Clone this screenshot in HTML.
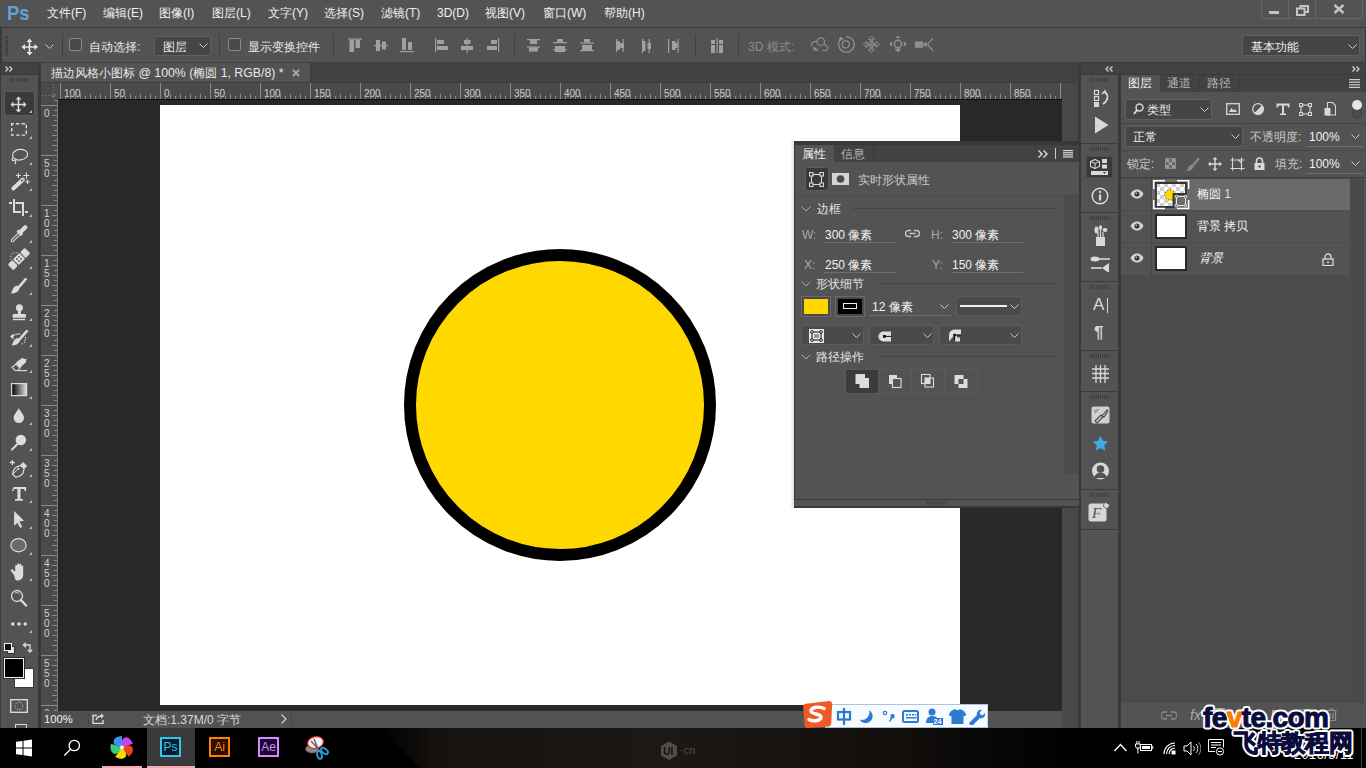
<!DOCTYPE html>
<html><head><meta charset="utf-8">
<style>
*{margin:0;padding:0;box-sizing:border-box}
html,body{width:1366px;height:768px;overflow:hidden;background:#535353;font-family:"Liberation Sans",sans-serif;color:#ddd;font-size:12px}
.a{position:absolute}
.oi{top:30px;line-height:34px;font-size:12px;color:#e8e8e8;white-space:nowrap}
.mi{top:0;line-height:27px;font-size:12px;color:#f0f0f0;white-space:nowrap}
</style></head><body>
<!-- menu bar -->
<div class="a" style="left:0;top:0;width:1366px;height:27px;background:#535353"></div>
<div class="a" style="left:0;top:27px;width:1366px;height:1px;background:#3a3a3a"></div>
<div class="a" style="left:7px;top:0px;font-size:21px;line-height:25px;font-weight:bold;color:#65a0d8;transform:scaleX(0.88);transform-origin:left">Ps</div>
<div class="a mi" style="left:47px">文件(F)</div>
<div class="a mi" style="left:103px">编辑(E)</div>
<div class="a mi" style="left:159px">图像(I)</div>
<div class="a mi" style="left:212px">图层(L)</div>
<div class="a mi" style="left:268px">文字(Y)</div>
<div class="a mi" style="left:324px">选择(S)</div>
<div class="a mi" style="left:381px">滤镜(T)</div>
<div class="a mi" style="left:437px">3D(D)</div>
<div class="a mi" style="left:485px">视图(V)</div>
<div class="a mi" style="left:543px">窗口(W)</div>
<div class="a mi" style="left:604px">帮助(H)</div>
<div class="a" style="left:1261px;top:-2px;width:102px;height:21px;border:1px solid #676767;border-radius:0 0 4px 4px"></div>
<div class="a" style="left:1288px;top:0;width:1px;height:18px;background:#676767"></div>
<div class="a" style="left:1315px;top:0;width:1px;height:18px;background:#676767"></div>
<div class="a" style="left:1269px;top:11px;width:10px;height:3px;background:#c4c4c4"></div>
<svg class="a" style="left:1296px;top:5px" width="13" height="11"><path d="M4.5 3.5V1h7.5v6h-3M1 3.5h7.5v6.5H1z" fill="none" stroke="#c4c4c4" stroke-width="2"/></svg>
<svg class="a" style="left:1333px;top:4px" width="12" height="10"><path d="M1.5 1l9 8M10.5 1l-9 8" stroke="#c4c4c4" stroke-width="2.4"/></svg>
<!-- options bar -->
<div class="a" style="left:0;top:28px;width:1366px;height:34px;background:#535353;border-left:2px solid #3a3a3a;border-right:1px solid #3a3a3a"></div>
<div class="a" style="left:5px;top:36px;width:3px;height:19px;background:repeating-linear-gradient(#383838 0 1px,transparent 1px 2px)"></div>
<svg class="a" style="left:21px;top:38px" width="18" height="18"><path d="M8.5 2v14M2 9h14" stroke="#e6e6e6" stroke-width="1.6"/><path d="M8.5 0.5l3 3.5h-6zM8.5 17.5l3-3.5h-6zM0.5 9l3.5-3v6zM17 9l-3.5-3v6z" fill="#e6e6e6"/></svg>
<svg class="a" style="left:45px;top:44px" width="9" height="6"><path d="M0.5 0.5l4 4 4-4" fill="none" stroke="#c8c8c8" stroke-width="1"/></svg>
<div class="a" style="left:62px;top:34px;width:1px;height:23px;background:#414141"></div>
<div class="a" style="left:69px;top:38px;width:13px;height:13px;border:1px solid #8a8a8a;border-radius:2px;background:#4a4a4a"></div>
<div class="a oi" style="left:89px">自动选择:</div>
<div class="a" style="left:154px;top:36px;width:57px;height:20px;border:1px solid #606060;background:#454545;border-radius:2px"></div>
<div class="a oi" style="left:163px">图层</div>
<svg class="a" style="left:199px;top:43px" width="9" height="6"><path d="M0.5 0.5l4 4 4-4" fill="none" stroke="#c8c8c8" stroke-width="1"/></svg>
<div class="a" style="left:219px;top:34px;width:1px;height:23px;background:#414141"></div>
<div class="a" style="left:228px;top:38px;width:13px;height:13px;border:1px solid #8a8a8a;border-radius:2px;background:#4a4a4a"></div>
<div class="a oi" style="left:248px">显示变换控件</div>
<div class="a" style="left:333px;top:34px;width:1px;height:23px;background:#414141"></div>
<svg class="a" style="left:346px;top:38px" width="380" height="16" fill="#a0a0a0">
<rect x="2" y="0.5" width="14" height="1.2"/><rect x="3.5" y="2" width="4.5" height="12"/><rect x="9.5" y="2" width="4.5" height="8"/>
<rect x="28" y="7" width="14" height="1.2"/><rect x="30" y="2" width="4" height="11"/><rect x="36" y="3.5" width="4" height="8"/>
<rect x="54" y="13" width="14" height="1.2"/><rect x="56" y="0" width="4" height="12"/><rect x="62" y="4" width="4" height="8"/>
<rect x="89" y="0" width="1.2" height="14"/><rect x="91" y="2" width="7" height="4"/><rect x="91" y="8" width="11" height="4"/>
<rect x="120.5" y="0" width="1.2" height="15"/><rect x="118" y="2" width="6.5" height="4"/><rect x="115" y="8" width="12" height="4"/>
<rect x="152" y="0" width="1.2" height="14"/><rect x="145" y="2" width="6" height="4"/><rect x="141" y="8" width="10" height="4"/>
<rect x="181" y="1" width="13" height="1.2"/><rect x="181" y="8.5" width="13" height="1.2"/><rect x="184" y="2" width="7" height="4"/><rect x="183" y="9.5" width="9" height="4"/>
<rect x="207" y="4" width="14" height="1.2"/><rect x="207" y="11" width="14" height="1.2"/><rect x="211" y="1" width="6" height="3"/><rect x="209" y="8" width="10" height="6"/>
<rect x="234" y="4.5" width="14" height="1.2"/><rect x="234" y="12" width="14" height="1.2"/><rect x="238" y="1" width="6" height="3.5"/><rect x="236" y="7" width="10" height="5"/>
<rect x="270" y="1" width="1.2" height="13"/><rect x="271" y="3" width="3" height="9"/><rect x="274" y="5" width="4" height="5"/><rect x="276.5" y="1" width="1.2" height="13"/>
<rect x="296" y="1" width="1.2" height="14"/><rect x="296" y="3" width="3.5" height="10"/><rect x="302.5" y="1" width="1.2" height="14"/><rect x="301.5" y="5" width="3.5" height="6"/>
<rect x="331.5" y="1" width="1.2" height="14"/><rect x="326" y="3" width="3.5" height="9"/><rect x="328" y="5" width="3.5" height="5"/><rect x="322" y="1" width="1.2" height="14"/>
<rect x="365" y="2" width="4" height="4"/><rect x="365" y="7" width="4" height="8"/><rect x="370.5" y="0" width="1.2" height="15"/><rect x="373" y="2" width="4" height="4"/><rect x="373" y="7" width="4" height="8"/>
</svg>
<div class="a" style="left:514px;top:34px;width:1px;height:23px;background:#414141"></div>
<div class="a" style="left:695px;top:34px;width:1px;height:23px;background:#414141"></div>
<div class="a" style="left:738px;top:34px;width:1px;height:23px;background:#414141"></div>
<div class="a oi" style="left:748px;color:#8c8c8c">3D 模式:</div>
<svg class="a" style="left:805px;top:34px" width="135" height="24" fill="none" stroke="#8f8f8f" stroke-width="1.2">
<circle cx="15.8" cy="7.7" r="3.8"/><path d="M11.8 7.2C7 8 5.5 10 6.8 12.3"/><path d="M8.6 12.2l5.6 4.3H8.2z" fill="#8f8f8f" stroke="none"/><path d="M17.5 16.5h3.2a2.3 2.3 0 0 0 1-4.3L19.3 9.9"/>
<path d="M36.2 4.6A7.8 7.8 0 1 0 41 2.6" /><path d="M33.5 7.5l1.5-5 4.2 2.2z" fill="#8f8f8f" stroke="none"/><circle cx="40.7" cy="10.4" r="3.5"/>
<path d="M66.4 2.4 L69.4 5.4 L67.6 5.4 L67.6 9.2 L71.4 9.2 L71.4 7.4 L74.4 10.4 L71.4 13.4 L71.4 11.6 L67.6 11.6 L67.6 15.4 L69.4 15.4 L66.4 18.4 L63.4 15.4 L65.2 15.4 L65.2 11.6 L61.4 11.6 L61.4 13.4 L58.4 10.4 L61.4 7.4 L61.4 9.2 L65.2 9.2 L65.2 5.4 L63.4 5.4z" stroke-width="1"/><path d="M66.4 5v10.8M61 10.4h10.8" stroke-width="0.8"/>
<circle cx="92.9" cy="9.9" r="3.6" stroke-width="1.6"/><path d="M92.9 1.5l2.5 2.6h-5zM84 9.9l3-2.8v5.6zM101.8 9.9l-3-2.8v5.6zM92.9 18.6l3.6-3.8h-7.2z" fill="#8f8f8f" stroke="none"/><path d="M92.9 14v2.5" stroke-width="2"/>
<rect x="109.9" y="7.4" width="8.2" height="6.4" fill="#8f8f8f" stroke="none"/><path d="M117.5 10.6l4-3v6z" fill="#8f8f8f" stroke="none"/><path d="M128 4.4l-5.5 6 5.5 6.4"/>
</svg>
<div class="a" style="left:1242px;top:35px;width:118px;height:21px;border:1px solid #606060;background:#454545;border-radius:2px"></div>
<div class="a oi" style="left:1251px;top:30px;color:#f0f0f0">基本功能</div>
<svg class="a" style="left:1348px;top:44px" width="9" height="6"><path d="M0.5 0.5l4 4 4-4" fill="none" stroke="#c8c8c8" stroke-width="1"/></svg>
<!-- doc tab row -->
<div class="a" style="left:41px;top:62px;width:1037px;height:21px;background:#424242"></div>
<div class="a" style="left:41px;top:63px;width:269px;height:19px;background:#535353"></div>
<div class="a" style="left:51px;top:64px;line-height:19px;font-size:12.3px;color:#e8e8e8;white-space:nowrap">描边风格小图标 @ 100% (椭圆 1, RGB/8) *</div>
<svg class="a" style="left:292px;top:69px" width="8" height="8"><path d="M1 1l6 6M7 1l-6 6" stroke="#a8a8a8" stroke-width="1.8"/></svg>
<div class="a" style="left:310px;top:63px;width:1px;height:19px;background:#3a3a3a"></div>
<div class="a" style="left:41px;top:82px;width:1037px;height:1px;background:#3c3c3c"></div>
<!-- left toolbar -->
<div class="a" style="left:0;top:62px;width:41px;height:666px;background:#3a3a3a"></div>
<div class="a" style="left:1px;top:75px;width:37px;height:653px;background:#535353"></div>
<div class="a" style="left:1px;top:63px;width:37px;height:11px;background:#424242"></div>
<svg class="a" style="left:5px;top:66px" width="9" height="6" fill="none" stroke="#d0d0d0" stroke-width="1.3"><path d="M0.5 0.5L3 3 0.5 5.5M4.5 0.5L7 3 4.5 5.5"/></svg>
<div class="a" style="left:10px;top:78px;width:19px;height:4px;background:repeating-linear-gradient(90deg,#3c3c3c 0 1px,transparent 1px 2px)"></div>
<div class="a" style="left:4px;top:91px;width:31px;height:25px;background:#3a3a3a;border:1px solid #5c5c5c;border-radius:3px"></div>
<svg class="a" style="left:0;top:85px" width="40" height="550"><g transform="translate(0 -85)">
<path d="M18.5 98v13M12 104.5h13" stroke="#dcdcdc" stroke-width="1.6"/><path d="M18.5 96.5l3 3h-6zM18.5 112.5l3-3h-6zM10.5 104.5l3-3v6zM26.5 104.5l-3-3v6z" fill="#dcdcdc"/>
<rect x="11.7" y="123.7" width="14.6" height="11.4" fill="none" stroke="#dcdcdc" stroke-width="1.4" stroke-dasharray="3.5 2.2" stroke-dashoffset="1.5"/>
<ellipse cx="20.1" cy="154.7" rx="7.6" ry="5.3" fill="none" stroke="#dcdcdc" stroke-width="1.2" transform="rotate(-8 20 155)"/><path d="M13 158c-1.5 1-1 3 1 2.5s2 1.5 1 3.8" fill="none" stroke="#dcdcdc" stroke-width="1.2"/>
<path d="M13.3 188.5l9.5-8.8" stroke="#dcdcdc" stroke-width="4" stroke-linecap="round"/><path d="M21.5 181l1.3-1.2" stroke="#535353" stroke-width="1.2" stroke-linecap="round"/>
<path d="M18.4 173v5M15.9 175.5h5M26.4 172.5v6M23.4 175.5h6M27.5 179.5v4.4M25.3 181.7h4.4" stroke="#dcdcdc" stroke-width="1.1"/>
<rect x="13" y="199" width="2" height="14" fill="#dcdcdc"/><rect x="9" y="202" width="3" height="2" fill="#dcdcdc"/><rect x="15.5" y="202" width="8.5" height="2" fill="#dcdcdc"/><rect x="22" y="202" width="2" height="14" fill="#dcdcdc"/><rect x="13" y="211" width="8" height="2" fill="#dcdcdc"/><rect x="25" y="211" width="3" height="2" fill="#dcdcdc"/>
<path d="M12.5 240.5l7.5-7.5" stroke="#dcdcdc" stroke-width="3.4" stroke-linecap="round"/><path d="M12.5 240.5l7.5-7.5" stroke="#535353" stroke-width="1.2" stroke-linecap="round"/><path d="M17.5 230.5l4.5 4.5" stroke="#dcdcdc" stroke-width="3"/><path d="M21 231.5l4.3-4.3" stroke="#dcdcdc" stroke-width="4.2" stroke-linecap="round"/>
<g transform="rotate(-45 19 259)"><rect x="7" y="255" width="6.5" height="8" rx="1.5" fill="#dcdcdc"/><rect x="14.5" y="255" width="9" height="8" fill="#dcdcdc"/><rect x="24.5" y="255" width="6.5" height="8" rx="1.5" fill="#dcdcdc"/><g fill="#535353"><circle cx="17.5" cy="257.5" r="0.9"/><circle cx="20.5" cy="257.5" r="0.9"/><circle cx="17.5" cy="260.5" r="0.9"/><circle cx="20.5" cy="260.5" r="0.9"/></g></g>
<path d="M11 259.5a5 5 0 0 1 7.5-6" fill="none" stroke="#dcdcdc" stroke-width="1.1" stroke-dasharray="1 1.6"/>
<path d="M25.7 279.2L18.5 287.5" stroke="#dcdcdc" stroke-width="2.6" stroke-linecap="round"/><path d="M18.7 286c-3.5-1-6 1.5-7.4 7.8 3.5-.3 6.8-1.8 8-4.5z" fill="#dcdcdc"/>
<circle cx="19.4" cy="307.8" r="3.5" fill="#dcdcdc"/><rect x="17.9" y="310" width="3" height="4.5" fill="#dcdcdc"/><path d="M12.7 317.7v-2.5c0-1 .5-1.2 1.5-1.2h10.2c1 0 1.5.2 1.5 1.2v2.5z" fill="#dcdcdc"/><rect x="12.9" y="318.8" width="12.1" height="1.4" fill="#dcdcdc"/>
<path d="M26.8 331.2L19 340" stroke="#dcdcdc" stroke-width="2.6" stroke-linecap="round"/><path d="M19.2 338.5c-3.5-1-6 1.5-7.2 7.3 3.5-.3 6.6-1.8 7.8-4.5z" fill="#dcdcdc"/><path d="M10 336.5l3.5-3v6z" fill="#dcdcdc"/><path d="M12.5 336.3c2-1.5 4.5-2.5 8-2.5" fill="none" stroke="#dcdcdc" stroke-width="1"/><g fill="#dcdcdc"><circle cx="25.5" cy="337.5" r="0.7"/><circle cx="25.3" cy="339.8" r="0.7"/><circle cx="24.5" cy="342" r="0.7"/><circle cx="22.3" cy="343.8" r="0.7"/></g>
<path d="M20 359.5l6-1.5-0.5 0 1 2-6.5 6.5-4-4z" fill="#dcdcdc"/><path d="M22.5 357.5l4 4-6.5 6.5-4-4z" fill="#dcdcdc"/><path d="M16 364l4 4-2.3 2.5h-2.5l-3.2-3.2z" fill="none" stroke="#dcdcdc" stroke-width="1.1"/><path d="M17.5 370.6h9.6" stroke="#dcdcdc" stroke-width="1.2"/>
<defs><linearGradient id="gr2" x1="0" y1="0" x2="1" y2="0"><stop offset="0" stop-color="#000"/><stop offset="1" stop-color="#e0e0e0"/></linearGradient></defs><rect x="11.6" y="383.6" width="15" height="12" fill="url(#gr2)" stroke="#dcdcdc" stroke-width="1.2"/>
<path d="M18.8 408c-1 3-5.2 6.3-5.2 9.7a5.2 5.2 0 0 0 10.4 0c0-3.4-4.2-6.7-5.2-9.7z" fill="#dcdcdc"/>
<circle cx="20.8" cy="440" r="5.2" fill="#dcdcdc"/><path d="M17 444.5l-5 5" stroke="#dcdcdc" stroke-width="2" stroke-linecap="round"/>
<path d="M12.4 460v5M9.9 462.5h5" stroke="#dcdcdc" stroke-width="1.3"/><path d="M12.6 474.2c.3-3 1.6-5.8 3.8-7.3l4.5-1.2 3.2 3.2-1.2 4.5c-1.5 2.2-4.3 3.5-7.3 3.8z" fill="none" stroke="#dcdcdc" stroke-width="1.2"/><path d="M20.4 464.7l2.7-2.7 4 4-2.7 2.7z" fill="#dcdcdc"/><path d="M13 474l4.8-4.8" stroke="#dcdcdc" stroke-width="1"/><circle cx="18.4" cy="468.8" r="1.1" fill="#dcdcdc"/>
<path d="M13.8 487h12.3v4h-1.5l-.6-2h-3.5v10h2.4v1.7h-7.9V499h2.4v-10h-3.4l-.6 2h-1.6z" fill="#dcdcdc"/>
<path d="M14.1 511v15l3.2-3.3 3 5.2 2-1.2-3-5.1 4.7-.8z" fill="#dcdcdc"/>
<ellipse cx="18.5" cy="545.2" rx="7.6" ry="6.6" fill="#6a6a6a" stroke="#dcdcdc" stroke-width="1.2"/>
<path d="M14 575l-3-4a1.1 1.1 0 0 1 1.7-1.4l2.5 2.5V566a1 1 0 0 1 2 0v5v-6.4a1 1 0 0 1 2 0V571v-6.3a1 1 0 0 1 2 0V571v-4.5a1 1 0 0 1 2 0V575c0 3-2.5 5.5-5.5 5.5S15 578 14 575z" fill="#dcdcdc"/>
<circle cx="17" cy="596" r="5.5" fill="none" stroke="#dcdcdc" stroke-width="1.3"/><path d="M20.8 600l5.3 5.5" stroke="#dcdcdc" stroke-width="2.4" stroke-linecap="round"/><path d="M15 593a3.5 3.5 0 0 1 4.5 1" fill="none" stroke="#dcdcdc" stroke-width="0.9"/>
<circle cx="12.8" cy="624" r="1.8" fill="#dcdcdc"/><circle cx="19" cy="624" r="1.8" fill="#dcdcdc"/><circle cx="25.2" cy="624" r="1.8" fill="#dcdcdc"/>
<path d="M32 110v3h-3z" fill="#b8b8b8"/><path d="M32 136v3h-3z" fill="#b8b8b8"/><path d="M32 162v3h-3z" fill="#b8b8b8"/><path d="M32 188v3h-3z" fill="#b8b8b8"/><path d="M32 214v3h-3z" fill="#b8b8b8"/><path d="M32 240v3h-3z" fill="#b8b8b8"/><path d="M32 266v3h-3z" fill="#b8b8b8"/><path d="M32 292v3h-3z" fill="#b8b8b8"/><path d="M32 318v3h-3z" fill="#b8b8b8"/><path d="M32 344v3h-3z" fill="#b8b8b8"/><path d="M32 370v3h-3z" fill="#b8b8b8"/><path d="M32 396v3h-3z" fill="#b8b8b8"/><path d="M32 422v3h-3z" fill="#b8b8b8"/><path d="M32 448v3h-3z" fill="#b8b8b8"/><path d="M32 474v3h-3z" fill="#b8b8b8"/><path d="M32 500v3h-3z" fill="#b8b8b8"/><path d="M32 526v3h-3z" fill="#b8b8b8"/><path d="M32 552v3h-3z" fill="#b8b8b8"/><path d="M32 578v3h-3z" fill="#b8b8b8"/><path d="M32 630v3h-3z" fill="#b8b8b8"/>
</g></svg>
<svg class="a" style="left:4px;top:643px" width="11" height="11"><rect x="3.5" y="3.5" width="7" height="7" fill="#e6e6e6" stroke="#333"/><rect x="0.5" y="0.5" width="7" height="7" fill="#111" stroke="#eee"/></svg>
<svg class="a" style="left:22px;top:642px" width="11" height="11" fill="none" stroke="#ddd" stroke-width="1.3"><path d="M1.5 3h6.5v7"/><path d="M3.8 0.8L1.5 3l2.3 2.2M5.8 7.8L8 10l2.2-2.2"/></svg>
<div class="a" style="left:14px;top:668px;width:20px;height:20px;background:#fff;border:1px solid #3a3a3a"></div>
<div class="a" style="left:4px;top:658px;width:20px;height:20px;background:#000;border:1.5px solid #f0f0f0;box-shadow:0 0 0 1px #2a2a2a"></div>
<svg class="a" style="left:10px;top:699px" width="18" height="14"><rect x="0.7" y="0.7" width="16.6" height="12.6" fill="none" stroke="#d8d8d8" stroke-width="1.4"/><circle cx="9" cy="7" r="3.8" fill="none" stroke="#d8d8d8" stroke-dasharray="1 1.3"/></svg>
<div class="a" style="left:15px;top:724px;width:12px;height:6px;border:1.5px solid #d8d8d8;border-bottom:0"></div>
<!-- rulers -->
<div class="a" style="left:41px;top:83px;width:1037px;height:17px;background:#4a4a4a"></div>
<div class="a" style="left:41px;top:83px;width:17px;height:628px;background:#4a4a4a"></div>
<div class="a" style="left:57px;top:100px;width:1px;height:611px;background:#7c7c7c"></div>
<svg class="a" style="left:41px;top:83px" width="17" height="17"><path d="M12.5 1v15M1 12.5h15" stroke="#7a7a7a" stroke-dasharray="1 2"/><path d="M12.5 10.5l2 2-2 2-2-2z" fill="none" stroke="#7a7a7a"/></svg>
<div class="a" style="left:58px;top:99px;width:1004px;height:1px;background:#111"></div>
<svg class="a" style="left:58px;top:83px" width="1004" height="16" font-size="10" font-family="Liberation Sans"><rect x="2" y="0" width="1" height="16" fill="#8a8a8a"/><text x="6" y="14" fill="#d0d0d0">100</text><rect x="7" y="13" width="1" height="3" fill="#8a8a8a"/><rect x="12" y="11" width="1" height="5" fill="#8a8a8a"/><rect x="17" y="13" width="1" height="3" fill="#8a8a8a"/><rect x="22" y="11" width="1" height="5" fill="#8a8a8a"/><rect x="27" y="13" width="1" height="3" fill="#8a8a8a"/><rect x="32" y="11" width="1" height="5" fill="#8a8a8a"/><rect x="37" y="13" width="1" height="3" fill="#8a8a8a"/><rect x="42" y="11" width="1" height="5" fill="#8a8a8a"/><rect x="47" y="13" width="1" height="3" fill="#8a8a8a"/><rect x="52" y="0" width="1" height="16" fill="#8a8a8a"/><text x="56" y="14" fill="#d0d0d0">50</text><rect x="57" y="13" width="1" height="3" fill="#8a8a8a"/><rect x="62" y="11" width="1" height="5" fill="#8a8a8a"/><rect x="67" y="13" width="1" height="3" fill="#8a8a8a"/><rect x="72" y="11" width="1" height="5" fill="#8a8a8a"/><rect x="77" y="13" width="1" height="3" fill="#8a8a8a"/><rect x="82" y="11" width="1" height="5" fill="#8a8a8a"/><rect x="87" y="13" width="1" height="3" fill="#8a8a8a"/><rect x="92" y="11" width="1" height="5" fill="#8a8a8a"/><rect x="97" y="13" width="1" height="3" fill="#8a8a8a"/><rect x="102" y="0" width="1" height="16" fill="#8a8a8a"/><text x="106" y="14" fill="#d0d0d0">0</text><rect x="107" y="13" width="1" height="3" fill="#8a8a8a"/><rect x="112" y="11" width="1" height="5" fill="#8a8a8a"/><rect x="117" y="13" width="1" height="3" fill="#8a8a8a"/><rect x="122" y="11" width="1" height="5" fill="#8a8a8a"/><rect x="127" y="13" width="1" height="3" fill="#8a8a8a"/><rect x="132" y="11" width="1" height="5" fill="#8a8a8a"/><rect x="137" y="13" width="1" height="3" fill="#8a8a8a"/><rect x="142" y="11" width="1" height="5" fill="#8a8a8a"/><rect x="147" y="13" width="1" height="3" fill="#8a8a8a"/><rect x="152" y="0" width="1" height="16" fill="#8a8a8a"/><text x="156" y="14" fill="#d0d0d0">50</text><rect x="157" y="13" width="1" height="3" fill="#8a8a8a"/><rect x="162" y="11" width="1" height="5" fill="#8a8a8a"/><rect x="167" y="13" width="1" height="3" fill="#8a8a8a"/><rect x="172" y="11" width="1" height="5" fill="#8a8a8a"/><rect x="177" y="13" width="1" height="3" fill="#8a8a8a"/><rect x="182" y="11" width="1" height="5" fill="#8a8a8a"/><rect x="187" y="13" width="1" height="3" fill="#8a8a8a"/><rect x="192" y="11" width="1" height="5" fill="#8a8a8a"/><rect x="197" y="13" width="1" height="3" fill="#8a8a8a"/><rect x="202" y="0" width="1" height="16" fill="#8a8a8a"/><text x="206" y="14" fill="#d0d0d0">100</text><rect x="207" y="13" width="1" height="3" fill="#8a8a8a"/><rect x="212" y="11" width="1" height="5" fill="#8a8a8a"/><rect x="217" y="13" width="1" height="3" fill="#8a8a8a"/><rect x="222" y="11" width="1" height="5" fill="#8a8a8a"/><rect x="227" y="13" width="1" height="3" fill="#8a8a8a"/><rect x="232" y="11" width="1" height="5" fill="#8a8a8a"/><rect x="237" y="13" width="1" height="3" fill="#8a8a8a"/><rect x="242" y="11" width="1" height="5" fill="#8a8a8a"/><rect x="247" y="13" width="1" height="3" fill="#8a8a8a"/><rect x="252" y="0" width="1" height="16" fill="#8a8a8a"/><text x="256" y="14" fill="#d0d0d0">150</text><rect x="257" y="13" width="1" height="3" fill="#8a8a8a"/><rect x="262" y="11" width="1" height="5" fill="#8a8a8a"/><rect x="267" y="13" width="1" height="3" fill="#8a8a8a"/><rect x="272" y="11" width="1" height="5" fill="#8a8a8a"/><rect x="277" y="13" width="1" height="3" fill="#8a8a8a"/><rect x="282" y="11" width="1" height="5" fill="#8a8a8a"/><rect x="287" y="13" width="1" height="3" fill="#8a8a8a"/><rect x="292" y="11" width="1" height="5" fill="#8a8a8a"/><rect x="297" y="13" width="1" height="3" fill="#8a8a8a"/><rect x="302" y="0" width="1" height="16" fill="#8a8a8a"/><text x="306" y="14" fill="#d0d0d0">200</text><rect x="307" y="13" width="1" height="3" fill="#8a8a8a"/><rect x="312" y="11" width="1" height="5" fill="#8a8a8a"/><rect x="317" y="13" width="1" height="3" fill="#8a8a8a"/><rect x="322" y="11" width="1" height="5" fill="#8a8a8a"/><rect x="327" y="13" width="1" height="3" fill="#8a8a8a"/><rect x="332" y="11" width="1" height="5" fill="#8a8a8a"/><rect x="337" y="13" width="1" height="3" fill="#8a8a8a"/><rect x="342" y="11" width="1" height="5" fill="#8a8a8a"/><rect x="347" y="13" width="1" height="3" fill="#8a8a8a"/><rect x="352" y="0" width="1" height="16" fill="#8a8a8a"/><text x="356" y="14" fill="#d0d0d0">250</text><rect x="357" y="13" width="1" height="3" fill="#8a8a8a"/><rect x="362" y="11" width="1" height="5" fill="#8a8a8a"/><rect x="367" y="13" width="1" height="3" fill="#8a8a8a"/><rect x="372" y="11" width="1" height="5" fill="#8a8a8a"/><rect x="377" y="13" width="1" height="3" fill="#8a8a8a"/><rect x="382" y="11" width="1" height="5" fill="#8a8a8a"/><rect x="387" y="13" width="1" height="3" fill="#8a8a8a"/><rect x="392" y="11" width="1" height="5" fill="#8a8a8a"/><rect x="397" y="13" width="1" height="3" fill="#8a8a8a"/><rect x="402" y="0" width="1" height="16" fill="#8a8a8a"/><text x="406" y="14" fill="#d0d0d0">300</text><rect x="407" y="13" width="1" height="3" fill="#8a8a8a"/><rect x="412" y="11" width="1" height="5" fill="#8a8a8a"/><rect x="417" y="13" width="1" height="3" fill="#8a8a8a"/><rect x="422" y="11" width="1" height="5" fill="#8a8a8a"/><rect x="427" y="13" width="1" height="3" fill="#8a8a8a"/><rect x="432" y="11" width="1" height="5" fill="#8a8a8a"/><rect x="437" y="13" width="1" height="3" fill="#8a8a8a"/><rect x="442" y="11" width="1" height="5" fill="#8a8a8a"/><rect x="447" y="13" width="1" height="3" fill="#8a8a8a"/><rect x="452" y="0" width="1" height="16" fill="#8a8a8a"/><text x="456" y="14" fill="#d0d0d0">350</text><rect x="457" y="13" width="1" height="3" fill="#8a8a8a"/><rect x="462" y="11" width="1" height="5" fill="#8a8a8a"/><rect x="467" y="13" width="1" height="3" fill="#8a8a8a"/><rect x="472" y="11" width="1" height="5" fill="#8a8a8a"/><rect x="477" y="13" width="1" height="3" fill="#8a8a8a"/><rect x="482" y="11" width="1" height="5" fill="#8a8a8a"/><rect x="487" y="13" width="1" height="3" fill="#8a8a8a"/><rect x="492" y="11" width="1" height="5" fill="#8a8a8a"/><rect x="497" y="13" width="1" height="3" fill="#8a8a8a"/><rect x="502" y="0" width="1" height="16" fill="#8a8a8a"/><text x="506" y="14" fill="#d0d0d0">400</text><rect x="507" y="13" width="1" height="3" fill="#8a8a8a"/><rect x="512" y="11" width="1" height="5" fill="#8a8a8a"/><rect x="517" y="13" width="1" height="3" fill="#8a8a8a"/><rect x="522" y="11" width="1" height="5" fill="#8a8a8a"/><rect x="527" y="13" width="1" height="3" fill="#8a8a8a"/><rect x="532" y="11" width="1" height="5" fill="#8a8a8a"/><rect x="537" y="13" width="1" height="3" fill="#8a8a8a"/><rect x="542" y="11" width="1" height="5" fill="#8a8a8a"/><rect x="547" y="13" width="1" height="3" fill="#8a8a8a"/><rect x="552" y="0" width="1" height="16" fill="#8a8a8a"/><text x="556" y="14" fill="#d0d0d0">450</text><rect x="557" y="13" width="1" height="3" fill="#8a8a8a"/><rect x="562" y="11" width="1" height="5" fill="#8a8a8a"/><rect x="567" y="13" width="1" height="3" fill="#8a8a8a"/><rect x="572" y="11" width="1" height="5" fill="#8a8a8a"/><rect x="577" y="13" width="1" height="3" fill="#8a8a8a"/><rect x="582" y="11" width="1" height="5" fill="#8a8a8a"/><rect x="587" y="13" width="1" height="3" fill="#8a8a8a"/><rect x="592" y="11" width="1" height="5" fill="#8a8a8a"/><rect x="597" y="13" width="1" height="3" fill="#8a8a8a"/><rect x="602" y="0" width="1" height="16" fill="#8a8a8a"/><text x="606" y="14" fill="#d0d0d0">500</text><rect x="607" y="13" width="1" height="3" fill="#8a8a8a"/><rect x="612" y="11" width="1" height="5" fill="#8a8a8a"/><rect x="617" y="13" width="1" height="3" fill="#8a8a8a"/><rect x="622" y="11" width="1" height="5" fill="#8a8a8a"/><rect x="627" y="13" width="1" height="3" fill="#8a8a8a"/><rect x="632" y="11" width="1" height="5" fill="#8a8a8a"/><rect x="637" y="13" width="1" height="3" fill="#8a8a8a"/><rect x="642" y="11" width="1" height="5" fill="#8a8a8a"/><rect x="647" y="13" width="1" height="3" fill="#8a8a8a"/><rect x="652" y="0" width="1" height="16" fill="#8a8a8a"/><text x="656" y="14" fill="#d0d0d0">550</text><rect x="657" y="13" width="1" height="3" fill="#8a8a8a"/><rect x="662" y="11" width="1" height="5" fill="#8a8a8a"/><rect x="667" y="13" width="1" height="3" fill="#8a8a8a"/><rect x="672" y="11" width="1" height="5" fill="#8a8a8a"/><rect x="677" y="13" width="1" height="3" fill="#8a8a8a"/><rect x="682" y="11" width="1" height="5" fill="#8a8a8a"/><rect x="687" y="13" width="1" height="3" fill="#8a8a8a"/><rect x="692" y="11" width="1" height="5" fill="#8a8a8a"/><rect x="697" y="13" width="1" height="3" fill="#8a8a8a"/><rect x="702" y="0" width="1" height="16" fill="#8a8a8a"/><text x="706" y="14" fill="#d0d0d0">600</text><rect x="707" y="13" width="1" height="3" fill="#8a8a8a"/><rect x="712" y="11" width="1" height="5" fill="#8a8a8a"/><rect x="717" y="13" width="1" height="3" fill="#8a8a8a"/><rect x="722" y="11" width="1" height="5" fill="#8a8a8a"/><rect x="727" y="13" width="1" height="3" fill="#8a8a8a"/><rect x="732" y="11" width="1" height="5" fill="#8a8a8a"/><rect x="737" y="13" width="1" height="3" fill="#8a8a8a"/><rect x="742" y="11" width="1" height="5" fill="#8a8a8a"/><rect x="747" y="13" width="1" height="3" fill="#8a8a8a"/><rect x="752" y="0" width="1" height="16" fill="#8a8a8a"/><text x="756" y="14" fill="#d0d0d0">650</text><rect x="757" y="13" width="1" height="3" fill="#8a8a8a"/><rect x="762" y="11" width="1" height="5" fill="#8a8a8a"/><rect x="767" y="13" width="1" height="3" fill="#8a8a8a"/><rect x="772" y="11" width="1" height="5" fill="#8a8a8a"/><rect x="777" y="13" width="1" height="3" fill="#8a8a8a"/><rect x="782" y="11" width="1" height="5" fill="#8a8a8a"/><rect x="787" y="13" width="1" height="3" fill="#8a8a8a"/><rect x="792" y="11" width="1" height="5" fill="#8a8a8a"/><rect x="797" y="13" width="1" height="3" fill="#8a8a8a"/><rect x="802" y="0" width="1" height="16" fill="#8a8a8a"/><text x="806" y="14" fill="#d0d0d0">700</text><rect x="807" y="13" width="1" height="3" fill="#8a8a8a"/><rect x="812" y="11" width="1" height="5" fill="#8a8a8a"/><rect x="817" y="13" width="1" height="3" fill="#8a8a8a"/><rect x="822" y="11" width="1" height="5" fill="#8a8a8a"/><rect x="827" y="13" width="1" height="3" fill="#8a8a8a"/><rect x="832" y="11" width="1" height="5" fill="#8a8a8a"/><rect x="837" y="13" width="1" height="3" fill="#8a8a8a"/><rect x="842" y="11" width="1" height="5" fill="#8a8a8a"/><rect x="847" y="13" width="1" height="3" fill="#8a8a8a"/><rect x="852" y="0" width="1" height="16" fill="#8a8a8a"/><text x="856" y="14" fill="#d0d0d0">750</text><rect x="857" y="13" width="1" height="3" fill="#8a8a8a"/><rect x="862" y="11" width="1" height="5" fill="#8a8a8a"/><rect x="867" y="13" width="1" height="3" fill="#8a8a8a"/><rect x="872" y="11" width="1" height="5" fill="#8a8a8a"/><rect x="877" y="13" width="1" height="3" fill="#8a8a8a"/><rect x="882" y="11" width="1" height="5" fill="#8a8a8a"/><rect x="887" y="13" width="1" height="3" fill="#8a8a8a"/><rect x="892" y="11" width="1" height="5" fill="#8a8a8a"/><rect x="897" y="13" width="1" height="3" fill="#8a8a8a"/><rect x="902" y="0" width="1" height="16" fill="#8a8a8a"/><text x="906" y="14" fill="#d0d0d0">800</text><rect x="907" y="13" width="1" height="3" fill="#8a8a8a"/><rect x="912" y="11" width="1" height="5" fill="#8a8a8a"/><rect x="917" y="13" width="1" height="3" fill="#8a8a8a"/><rect x="922" y="11" width="1" height="5" fill="#8a8a8a"/><rect x="927" y="13" width="1" height="3" fill="#8a8a8a"/><rect x="932" y="11" width="1" height="5" fill="#8a8a8a"/><rect x="937" y="13" width="1" height="3" fill="#8a8a8a"/><rect x="942" y="11" width="1" height="5" fill="#8a8a8a"/><rect x="947" y="13" width="1" height="3" fill="#8a8a8a"/><rect x="952" y="0" width="1" height="16" fill="#8a8a8a"/><text x="956" y="14" fill="#d0d0d0">850</text><rect x="957" y="13" width="1" height="3" fill="#8a8a8a"/><rect x="962" y="11" width="1" height="5" fill="#8a8a8a"/><rect x="967" y="13" width="1" height="3" fill="#8a8a8a"/><rect x="972" y="11" width="1" height="5" fill="#8a8a8a"/><rect x="977" y="13" width="1" height="3" fill="#8a8a8a"/><rect x="982" y="11" width="1" height="5" fill="#8a8a8a"/><rect x="987" y="13" width="1" height="3" fill="#8a8a8a"/><rect x="992" y="11" width="1" height="5" fill="#8a8a8a"/><rect x="997" y="13" width="1" height="3" fill="#8a8a8a"/><rect x="1002" y="0" width="1" height="16" fill="#8a8a8a"/><text x="1006" y="14" fill="#d0d0d0">900</text></svg>
<svg class="a" style="left:41px;top:100px" width="16" height="611" font-size="10" font-family="Liberation Sans"><rect x="13" y="0" width="3" height="1" fill="#8a8a8a"/><rect x="0" y="5" width="16" height="1" fill="#8a8a8a"/><text x="3" y="17" fill="#d0d0d0">0</text><rect x="13" y="10" width="3" height="1" fill="#8a8a8a"/><rect x="11" y="15" width="5" height="1" fill="#8a8a8a"/><rect x="13" y="20" width="3" height="1" fill="#8a8a8a"/><rect x="11" y="25" width="5" height="1" fill="#8a8a8a"/><rect x="13" y="30" width="3" height="1" fill="#8a8a8a"/><rect x="11" y="35" width="5" height="1" fill="#8a8a8a"/><rect x="13" y="40" width="3" height="1" fill="#8a8a8a"/><rect x="11" y="45" width="5" height="1" fill="#8a8a8a"/><rect x="13" y="50" width="3" height="1" fill="#8a8a8a"/><rect x="0" y="55" width="16" height="1" fill="#8a8a8a"/><text x="3" y="67" fill="#d0d0d0">5</text><text x="3" y="77" fill="#d0d0d0">0</text><rect x="13" y="60" width="3" height="1" fill="#8a8a8a"/><rect x="11" y="65" width="5" height="1" fill="#8a8a8a"/><rect x="13" y="70" width="3" height="1" fill="#8a8a8a"/><rect x="11" y="75" width="5" height="1" fill="#8a8a8a"/><rect x="13" y="80" width="3" height="1" fill="#8a8a8a"/><rect x="11" y="85" width="5" height="1" fill="#8a8a8a"/><rect x="13" y="90" width="3" height="1" fill="#8a8a8a"/><rect x="11" y="95" width="5" height="1" fill="#8a8a8a"/><rect x="13" y="100" width="3" height="1" fill="#8a8a8a"/><rect x="0" y="105" width="16" height="1" fill="#8a8a8a"/><text x="3" y="117" fill="#d0d0d0">1</text><text x="3" y="127" fill="#d0d0d0">0</text><text x="3" y="137" fill="#d0d0d0">0</text><rect x="13" y="110" width="3" height="1" fill="#8a8a8a"/><rect x="11" y="115" width="5" height="1" fill="#8a8a8a"/><rect x="13" y="120" width="3" height="1" fill="#8a8a8a"/><rect x="11" y="125" width="5" height="1" fill="#8a8a8a"/><rect x="13" y="130" width="3" height="1" fill="#8a8a8a"/><rect x="11" y="135" width="5" height="1" fill="#8a8a8a"/><rect x="13" y="140" width="3" height="1" fill="#8a8a8a"/><rect x="11" y="145" width="5" height="1" fill="#8a8a8a"/><rect x="13" y="150" width="3" height="1" fill="#8a8a8a"/><rect x="0" y="155" width="16" height="1" fill="#8a8a8a"/><text x="3" y="167" fill="#d0d0d0">1</text><text x="3" y="177" fill="#d0d0d0">5</text><text x="3" y="187" fill="#d0d0d0">0</text><rect x="13" y="160" width="3" height="1" fill="#8a8a8a"/><rect x="11" y="165" width="5" height="1" fill="#8a8a8a"/><rect x="13" y="170" width="3" height="1" fill="#8a8a8a"/><rect x="11" y="175" width="5" height="1" fill="#8a8a8a"/><rect x="13" y="180" width="3" height="1" fill="#8a8a8a"/><rect x="11" y="185" width="5" height="1" fill="#8a8a8a"/><rect x="13" y="190" width="3" height="1" fill="#8a8a8a"/><rect x="11" y="195" width="5" height="1" fill="#8a8a8a"/><rect x="13" y="200" width="3" height="1" fill="#8a8a8a"/><rect x="0" y="205" width="16" height="1" fill="#8a8a8a"/><text x="3" y="217" fill="#d0d0d0">2</text><text x="3" y="227" fill="#d0d0d0">0</text><text x="3" y="237" fill="#d0d0d0">0</text><rect x="13" y="210" width="3" height="1" fill="#8a8a8a"/><rect x="11" y="215" width="5" height="1" fill="#8a8a8a"/><rect x="13" y="220" width="3" height="1" fill="#8a8a8a"/><rect x="11" y="225" width="5" height="1" fill="#8a8a8a"/><rect x="13" y="230" width="3" height="1" fill="#8a8a8a"/><rect x="11" y="235" width="5" height="1" fill="#8a8a8a"/><rect x="13" y="240" width="3" height="1" fill="#8a8a8a"/><rect x="11" y="245" width="5" height="1" fill="#8a8a8a"/><rect x="13" y="250" width="3" height="1" fill="#8a8a8a"/><rect x="0" y="255" width="16" height="1" fill="#8a8a8a"/><text x="3" y="267" fill="#d0d0d0">2</text><text x="3" y="277" fill="#d0d0d0">5</text><text x="3" y="287" fill="#d0d0d0">0</text><rect x="13" y="260" width="3" height="1" fill="#8a8a8a"/><rect x="11" y="265" width="5" height="1" fill="#8a8a8a"/><rect x="13" y="270" width="3" height="1" fill="#8a8a8a"/><rect x="11" y="275" width="5" height="1" fill="#8a8a8a"/><rect x="13" y="280" width="3" height="1" fill="#8a8a8a"/><rect x="11" y="285" width="5" height="1" fill="#8a8a8a"/><rect x="13" y="290" width="3" height="1" fill="#8a8a8a"/><rect x="11" y="295" width="5" height="1" fill="#8a8a8a"/><rect x="13" y="300" width="3" height="1" fill="#8a8a8a"/><rect x="0" y="305" width="16" height="1" fill="#8a8a8a"/><text x="3" y="317" fill="#d0d0d0">3</text><text x="3" y="327" fill="#d0d0d0">0</text><text x="3" y="337" fill="#d0d0d0">0</text><rect x="13" y="310" width="3" height="1" fill="#8a8a8a"/><rect x="11" y="315" width="5" height="1" fill="#8a8a8a"/><rect x="13" y="320" width="3" height="1" fill="#8a8a8a"/><rect x="11" y="325" width="5" height="1" fill="#8a8a8a"/><rect x="13" y="330" width="3" height="1" fill="#8a8a8a"/><rect x="11" y="335" width="5" height="1" fill="#8a8a8a"/><rect x="13" y="340" width="3" height="1" fill="#8a8a8a"/><rect x="11" y="345" width="5" height="1" fill="#8a8a8a"/><rect x="13" y="350" width="3" height="1" fill="#8a8a8a"/><rect x="0" y="355" width="16" height="1" fill="#8a8a8a"/><text x="3" y="367" fill="#d0d0d0">3</text><text x="3" y="377" fill="#d0d0d0">5</text><text x="3" y="387" fill="#d0d0d0">0</text><rect x="13" y="360" width="3" height="1" fill="#8a8a8a"/><rect x="11" y="365" width="5" height="1" fill="#8a8a8a"/><rect x="13" y="370" width="3" height="1" fill="#8a8a8a"/><rect x="11" y="375" width="5" height="1" fill="#8a8a8a"/><rect x="13" y="380" width="3" height="1" fill="#8a8a8a"/><rect x="11" y="385" width="5" height="1" fill="#8a8a8a"/><rect x="13" y="390" width="3" height="1" fill="#8a8a8a"/><rect x="11" y="395" width="5" height="1" fill="#8a8a8a"/><rect x="13" y="400" width="3" height="1" fill="#8a8a8a"/><rect x="0" y="405" width="16" height="1" fill="#8a8a8a"/><text x="3" y="417" fill="#d0d0d0">4</text><text x="3" y="427" fill="#d0d0d0">0</text><text x="3" y="437" fill="#d0d0d0">0</text><rect x="13" y="410" width="3" height="1" fill="#8a8a8a"/><rect x="11" y="415" width="5" height="1" fill="#8a8a8a"/><rect x="13" y="420" width="3" height="1" fill="#8a8a8a"/><rect x="11" y="425" width="5" height="1" fill="#8a8a8a"/><rect x="13" y="430" width="3" height="1" fill="#8a8a8a"/><rect x="11" y="435" width="5" height="1" fill="#8a8a8a"/><rect x="13" y="440" width="3" height="1" fill="#8a8a8a"/><rect x="11" y="445" width="5" height="1" fill="#8a8a8a"/><rect x="13" y="450" width="3" height="1" fill="#8a8a8a"/><rect x="0" y="455" width="16" height="1" fill="#8a8a8a"/><text x="3" y="467" fill="#d0d0d0">4</text><text x="3" y="477" fill="#d0d0d0">5</text><text x="3" y="487" fill="#d0d0d0">0</text><rect x="13" y="460" width="3" height="1" fill="#8a8a8a"/><rect x="11" y="465" width="5" height="1" fill="#8a8a8a"/><rect x="13" y="470" width="3" height="1" fill="#8a8a8a"/><rect x="11" y="475" width="5" height="1" fill="#8a8a8a"/><rect x="13" y="480" width="3" height="1" fill="#8a8a8a"/><rect x="11" y="485" width="5" height="1" fill="#8a8a8a"/><rect x="13" y="490" width="3" height="1" fill="#8a8a8a"/><rect x="11" y="495" width="5" height="1" fill="#8a8a8a"/><rect x="13" y="500" width="3" height="1" fill="#8a8a8a"/><rect x="0" y="505" width="16" height="1" fill="#8a8a8a"/><text x="3" y="517" fill="#d0d0d0">5</text><text x="3" y="527" fill="#d0d0d0">0</text><text x="3" y="537" fill="#d0d0d0">0</text><rect x="13" y="510" width="3" height="1" fill="#8a8a8a"/><rect x="11" y="515" width="5" height="1" fill="#8a8a8a"/><rect x="13" y="520" width="3" height="1" fill="#8a8a8a"/><rect x="11" y="525" width="5" height="1" fill="#8a8a8a"/><rect x="13" y="530" width="3" height="1" fill="#8a8a8a"/><rect x="11" y="535" width="5" height="1" fill="#8a8a8a"/><rect x="13" y="540" width="3" height="1" fill="#8a8a8a"/><rect x="11" y="545" width="5" height="1" fill="#8a8a8a"/><rect x="13" y="550" width="3" height="1" fill="#8a8a8a"/><rect x="0" y="555" width="16" height="1" fill="#8a8a8a"/><text x="3" y="567" fill="#d0d0d0">5</text><text x="3" y="577" fill="#d0d0d0">5</text><text x="3" y="587" fill="#d0d0d0">0</text><rect x="13" y="560" width="3" height="1" fill="#8a8a8a"/><rect x="11" y="565" width="5" height="1" fill="#8a8a8a"/><rect x="13" y="570" width="3" height="1" fill="#8a8a8a"/><rect x="11" y="575" width="5" height="1" fill="#8a8a8a"/><rect x="13" y="580" width="3" height="1" fill="#8a8a8a"/><rect x="11" y="585" width="5" height="1" fill="#8a8a8a"/><rect x="13" y="590" width="3" height="1" fill="#8a8a8a"/><rect x="11" y="595" width="5" height="1" fill="#8a8a8a"/><rect x="13" y="600" width="3" height="1" fill="#8a8a8a"/><rect x="0" y="605" width="16" height="1" fill="#8a8a8a"/><text x="3" y="617" fill="#d0d0d0">6</text><text x="3" y="627" fill="#d0d0d0">0</text><text x="3" y="637" fill="#d0d0d0">0</text><rect x="13" y="610" width="3" height="1" fill="#8a8a8a"/></svg>
<!-- canvas -->
<div class="a" style="left:58px;top:100px;width:1004px;height:611px;background:#282828"></div>
<div class="a" style="left:1062px;top:83px;width:16px;height:628px;background:#494949"></div>
<div class="a" style="left:160px;top:105px;width:800px;height:600px;background:#fff"></div>
<svg class="a" style="left:0;top:0" width="1366" height="768"><circle cx="560" cy="405" r="150" fill="#ffd800" stroke="#000" stroke-width="12"/></svg>
<!-- status bar -->
<div class="a" style="left:58px;top:705px;width:1004px;height:6px;background:#282828"></div>
<div class="a" style="left:41px;top:711px;width:1037px;height:17px;background:#535353"></div>
<div class="a" style="left:41px;top:711px;width:47px;height:16px;background:#4f4f4f"></div>
<div class="a" style="left:88px;top:711px;width:1px;height:16px;background:#464646"></div>
<div class="a" style="left:291px;top:711px;width:1px;height:16px;background:#464646"></div>
<div class="a" style="left:1062px;top:711px;width:16px;height:17px;background:#494949"></div>
<div class="a" style="left:44px;top:711px;line-height:16px;font-size:11.2px;color:#f0f0f0">100%</div>
<svg class="a" style="left:92px;top:713px" width="13" height="11" fill="none" stroke="#dcdcdc" stroke-width="1.3"><path d="M5 2.5H1v8h10V7"/><path d="M4 7c1-3 3-4 6-4" /><path d="M9 0.5l3 2.5-3 2.5z" fill="#dcdcdc" stroke="none"/></svg>
<div class="a" style="left:143px;top:712px;line-height:16px;font-size:12px;color:#dadada">文档:1.37M/0 字节</div>
<svg class="a" style="left:281px;top:714px" width="6" height="10"><path d="M0.5 0.5l4.5 4.5-4.5 4.5" fill="none" stroke="#cfcfcf" stroke-width="1.2"/></svg>
<!-- right dock -->
<div class="a" style="left:1078px;top:62px;width:288px;height:666px;background:#3a3a3a"></div>
<div class="a" style="left:1081px;top:63px;width:285px;height:11px;background:#424242"></div>
<svg class="a" style="left:1105px;top:66px" width="8" height="6" fill="none" stroke="#d0d0d0" stroke-width="1.3"><path d="M3.5 0.5L1 3l2.5 2.5M7.5 0.5L5 3l2.5 2.5"/></svg>
<svg class="a" style="left:1352px;top:66px" width="8" height="6" fill="none" stroke="#d0d0d0" stroke-width="1.3"><path d="M0.5 0.5L3 3 0.5 5.5M4.5 0.5L7 3 4.5 5.5"/></svg>
<div class="a" style="left:1081px;top:75px;width:37px;height:68px;background:#535353"></div>
<div class="a" style="left:1090px;top:78px;width:19px;height:4px;background:repeating-linear-gradient(90deg,#3e3e3e 0 1px,transparent 1px 2px)"></div>
<div class="a" style="left:1081px;top:144px;width:37px;height:68px;background:#535353"></div>
<div class="a" style="left:1090px;top:147px;width:19px;height:4px;background:repeating-linear-gradient(90deg,#3e3e3e 0 1px,transparent 1px 2px)"></div>
<div class="a" style="left:1081px;top:213px;width:37px;height:68px;background:#535353"></div>
<div class="a" style="left:1090px;top:216px;width:19px;height:4px;background:repeating-linear-gradient(90deg,#3e3e3e 0 1px,transparent 1px 2px)"></div>
<div class="a" style="left:1081px;top:282px;width:37px;height:68px;background:#535353"></div>
<div class="a" style="left:1090px;top:285px;width:19px;height:4px;background:repeating-linear-gradient(90deg,#3e3e3e 0 1px,transparent 1px 2px)"></div>
<div class="a" style="left:1081px;top:351px;width:37px;height:40px;background:#535353"></div>
<div class="a" style="left:1090px;top:354px;width:19px;height:4px;background:repeating-linear-gradient(90deg,#3e3e3e 0 1px,transparent 1px 2px)"></div>
<div class="a" style="left:1081px;top:392px;width:37px;height:97px;background:#535353"></div>
<div class="a" style="left:1090px;top:395px;width:19px;height:4px;background:repeating-linear-gradient(90deg,#3e3e3e 0 1px,transparent 1px 2px)"></div>
<div class="a" style="left:1081px;top:490px;width:37px;height:39px;background:#535353"></div>
<div class="a" style="left:1090px;top:493px;width:19px;height:4px;background:repeating-linear-gradient(90deg,#3e3e3e 0 1px,transparent 1px 2px)"></div>
<div class="a" style="left:1081px;top:530px;width:37px;height:198px;background:#535353"></div>
<svg class="a" style="left:1093px;top:89px" width="16" height="19"><rect x="1.5" y="1.5" width="4" height="4" fill="none" stroke="#d8d8d8" stroke-width="1.2"/><rect x="1.5" y="7.5" width="4" height="4" fill="none" stroke="#d8d8d8" stroke-width="1.2"/><rect x="1" y="13" width="5" height="5" fill="#d8d8d8"/><path d="M9 5l3-3 1 3.5M12 3c4 3 3 9-2 12" fill="none" stroke="#d8d8d8" stroke-width="1.6"/></svg>
<svg class="a" style="left:1094px;top:116px" width="15" height="18"><path d="M1 0.5v17l13.5-8.5z" fill="#d8d8d8"/></svg>
<div class="a" style="left:1086px;top:156px;width:27px;height:22px;background:#393939;border:1px solid #4a4a4a;border-radius:2px"></div>
<svg class="a" style="left:1090px;top:158px" width="20" height="18"><path d="M5 1.5l4.5 2v5l-4.5 2-4.5-2v-5z" fill="none" stroke="#d8d8d8" stroke-width="1.1"/><path d="M0.5 3.5l4.5 2 4.5-2M5 5.5v5" fill="none" stroke="#d8d8d8" stroke-width="1"/><rect x="12" y="1" width="5" height="4" fill="#d8d8d8"/><rect x="12" y="6.5" width="5" height="4" fill="#d8d8d8"/><rect x="1" y="13" width="17" height="4" fill="#d8d8d8"/><path d="M13 14h3l-1.5 2z" fill="#393939"/></svg>
<svg class="a" style="left:1091px;top:187px" width="18" height="18"><circle cx="9" cy="9" r="7.8" fill="none" stroke="#d8d8d8" stroke-width="1.5"/><rect x="8" y="7.5" width="2.2" height="6" fill="#d8d8d8"/><circle cx="9.1" cy="5" r="1.2" fill="#d8d8d8"/></svg>
<svg class="a" style="left:1092px;top:225px" width="17" height="22"><rect x="4" y="12" width="9" height="9" fill="#d8d8d8"/><path d="M6 12V7M8.5 12V4M11 12V7" stroke="#d8d8d8" stroke-width="1.2"/><ellipse cx="4.5" cy="5" rx="2" ry="3.5" fill="#d8d8d8"/><ellipse cx="8.5" cy="2.5" rx="1.6" ry="2.5" fill="#d8d8d8"/><ellipse cx="13" cy="5" rx="2.5" ry="2" fill="#d8d8d8"/></svg>
<svg class="a" style="left:1090px;top:256px" width="21" height="16"><path d="M9 3h11" stroke="#d8d8d8" stroke-width="1.6"/><ellipse cx="5" cy="3" rx="4.5" ry="2.5" fill="#d8d8d8"/><path d="M1 12h11" stroke="#d8d8d8" stroke-width="1.6"/><path d="M12 12l7-5v10z" fill="#d8d8d8"/></svg>
<div class="a" style="left:1093px;top:296px;font-size:17px;line-height:18px;color:#d8d8d8">A</div><div class="a" style="left:1107px;top:298px;width:1px;height:15px;background:#d8d8d8"></div>
<div class="a" style="left:1094px;top:323px;font-size:17px;line-height:20px;color:#d8d8d8;font-weight:bold">¶</div>
<svg class="a" style="left:1091px;top:364px" width="19" height="20" stroke="#d8d8d8" stroke-width="1.3"><path d="M5 1v18M9.5 1v18M14 1v18M1 5h17M1 9.5h17M1 14h17"/></svg>
<svg class="a" style="left:1091px;top:406px" width="19" height="18"><rect x="0.5" y="0.5" width="18" height="17" rx="2" fill="#cfcfcf"/><path d="M4 15l6-6 2 2-6 6zM11 10l5-6 1 1-4 6z" fill="none" stroke="#444" stroke-width="1.1"/><path d="M3 6l3-3M4 7l4-4" stroke="#666" stroke-width="0.8"/></svg>
<svg class="a" style="left:1092px;top:435px" width="17" height="17"><path d="M8.5 0.8l2.4 5 5.4.7-4 3.8 1 5.4-4.8-2.6-4.8 2.6 1-5.4-4-3.8 5.4-.7z" fill="#3fa9e0"/></svg>
<svg class="a" style="left:1091px;top:462px" width="19" height="18"><circle cx="9.5" cy="9" r="8.5" fill="#d8d8d8"/><circle cx="9.5" cy="7" r="3.8" fill="#535353"/><path d="M3 16c1-4 4-5.5 6.5-5.5S15 12 16 16z" fill="#535353"/></svg>
<svg class="a" style="left:1088px;top:501px" width="24" height="21"><rect x="0.5" y="2.5" width="18" height="18" rx="2.5" fill="#d6d6d6"/><path d="M17 1l5 3-3 4-4-3z" fill="#d6d6d6" stroke="#535353" stroke-width="0.8"/><text x="4" y="17" font-family="Liberation Serif" font-style="italic" font-size="15" fill="#555">F</text></svg>
<div class="a" style="left:1121px;top:75px;width:245px;height:653px;background:#535353"></div>
<div class="a" style="left:1121px;top:75px;width:245px;height:17px;background:#424242"></div>
<div class="a" style="left:1121px;top:75px;width:39px;height:17px;background:#535353"></div>
<div class="a" style="left:1199px;top:75px;width:1px;height:17px;background:#3a3a3a"></div>
<div class="a" style="left:1239px;top:75px;width:1px;height:17px;background:#3a3a3a"></div>
<div class="a" style="left:1128px;top:75px;line-height:17px;font-size:12px;color:#f0f0f0">图层</div>
<div class="a" style="left:1167px;top:75px;line-height:17px;font-size:12px;color:#b4b4b4">通道</div>
<div class="a" style="left:1207px;top:75px;line-height:17px;font-size:12px;color:#b4b4b4">路径</div>
<svg class="a" style="left:1349px;top:79px" width="11" height="9" fill="#cfcfcf"><rect y="0" width="11" height="1.2"/><rect y="2.6" width="11" height="1.2"/><rect y="5.2" width="11" height="1.2"/><rect y="7.8" width="11" height="1.2"/></svg>
<div class="a" style="left:1125px;top:99px;width:87px;height:21px;background:#454545;border:1px solid #606060;border-radius:2px"></div>
<svg class="a" style="left:1133px;top:103px" width="11" height="12"><circle cx="6.5" cy="4.5" r="3.5" fill="none" stroke="#d8d8d8" stroke-width="1.5"/><path d="M4 7l-3 4" stroke="#d8d8d8" stroke-width="2"/></svg>
<div class="a" style="left:1147px;top:100px;line-height:21px;font-size:12px;color:#f0f0f0">类型</div>
<svg class="a" style="left:1200px;top:107px" width="9" height="6"><path d="M0.5 0.5l4 4 4-4" fill="none" stroke="#c8c8c8"/></svg>
<svg class="a" style="left:1226px;top:103px" width="14" height="12"><rect x="0.7" y="0.7" width="12.6" height="10.6" fill="none" stroke="#d8d8d8" stroke-width="1.3"/><path d="M3 9l2.5-4 2 2.5 1.5-1.5 2 3z" fill="#d8d8d8"/></svg>
<svg class="a" style="left:1252px;top:103px" width="12" height="12"><circle cx="6" cy="6" r="5.3" fill="none" stroke="#d8d8d8" stroke-width="1.2"/><path d="M10.2 2.2A5.3 5.3 0 0 1 2.2 10.2z" fill="#d8d8d8"/></svg>
<svg class="a" style="left:1276px;top:103px" width="14" height="12"><path d="M0.5 0.5h13v4h-1.5l-.5-2H8v8h2v1.5H4V10.5h2v-8H2.5l-.5 2H.5z" fill="#d8d8d8"/></svg>
<svg class="a" style="left:1299px;top:103px" width="13" height="13" fill="none" stroke="#d8d8d8" stroke-width="1.1"><rect x="2" y="2" width="9" height="9"/><rect x="0.5" y="0.5" width="3" height="3" fill="#535353"/><rect x="9.5" y="0.5" width="3" height="3" fill="#535353"/><rect x="0.5" y="9.5" width="3" height="3" fill="#535353"/><rect x="9.5" y="9.5" width="3" height="3" fill="#535353"/></svg>
<svg class="a" style="left:1324px;top:102px" width="12" height="14"><path d="M3.5 0.5h5l3 3v9.5h-8z" fill="none" stroke="#d8d8d8" stroke-width="1.1"/><rect x="0.5" y="6" width="6" height="7.5" fill="#d8d8d8"/></svg>
<div class="a" style="left:1352px;top:100px;width:10px;height:19px;border:1px solid #444;border-radius:5px;background:#4a4a4a"></div>
<div class="a" style="left:1352px;top:100px;width:10px;height:10px;border-radius:5px;background:#e6e6e6"></div>
<div class="a" style="left:1121px;top:123px;width:245px;height:1px;background:#464646"></div>
<div class="a" style="left:1125px;top:126px;width:118px;height:21px;background:#454545;border:1px solid #606060;border-radius:2px"></div>
<div class="a" style="left:1133px;top:127px;line-height:21px;font-size:12px;color:#f0f0f0">正常</div>
<svg class="a" style="left:1231px;top:134px" width="9" height="6"><path d="M0.5 0.5l4 4 4-4" fill="none" stroke="#c8c8c8"/></svg>
<div class="a" style="left:1250px;top:127px;line-height:21px;font-size:12px;color:#c8c8c8">不透明度:</div>
<div class="a" style="left:1309px;top:127px;line-height:21px;font-size:12px;color:#f0f0f0">100%</div>
<div class="a" style="left:1306px;top:146px;width:57px;height:1px;background:#6e6e6e"></div>
<svg class="a" style="left:1351px;top:134px" width="9" height="6"><path d="M0.5 0.5l4 4 4-4" fill="none" stroke="#c8c8c8"/></svg>
<div class="a" style="left:1121px;top:150px;width:245px;height:1px;background:#464646"></div>
<div class="a" style="left:1127px;top:154px;line-height:21px;font-size:12px;color:#c8c8c8">锁定:</div>
<svg class="a" style="left:1165px;top:158px" width="11" height="11"><rect x="0.5" y="0.5" width="10" height="10" fill="#6a6a6a" stroke="#8c8c8c"/><path d="M1 1h3v3H1zM7 1h3v3H7zM4 4h3v3H4zM1 7h3v3H1zM7 7h3v3H7z" fill="#9a9a9a"/></svg>
<svg class="a" style="left:1186px;top:157px" width="14" height="15"><path d="M12.5 2L6.5 9" stroke="#8a8a8a" stroke-width="2.2" stroke-linecap="round"/><path d="M6.8 8c-2.5-.8-4.5 1-5.8 6 2.8-.2 5.3-1.3 6.3-3.5z" fill="#8a8a8a"/></svg>
<svg class="a" style="left:1208px;top:157px" width="14" height="14"><path d="M7 2v10M2 7h10" stroke="#d8d8d8" stroke-width="1.4"/><path d="M7 0l2.5 2.5h-5zM7 14l2.5-2.5h-5zM0 7l2.5-2.5v5zM14 7l-2.5-2.5v5z" fill="#d8d8d8"/></svg>
<svg class="a" style="left:1230px;top:157px" width="15" height="14" fill="none" stroke="#d8d8d8" stroke-width="1.1"><path d="M2.5 0.5v13M11.5 0.5v13M0.5 3h14M0.5 11.5h14"/><path d="M8.5 3l3 3" /></svg>
<svg class="a" style="left:1254px;top:157px" width="11" height="13"><path d="M2.5 6V4a3 3 0 0 1 6 0v2" fill="none" stroke="#d8d8d8" stroke-width="1.6"/><rect x="0.5" y="6" width="10" height="7" fill="#d8d8d8"/><circle cx="5.5" cy="9.5" r="1.2" fill="#535353"/></svg>
<div class="a" style="left:1275px;top:154px;line-height:21px;font-size:12px;color:#c8c8c8">填充:</div>
<div class="a" style="left:1309px;top:154px;line-height:21px;font-size:12px;color:#f0f0f0">100%</div>
<div class="a" style="left:1306px;top:173px;width:57px;height:1px;background:#6e6e6e"></div>
<svg class="a" style="left:1351px;top:161px" width="9" height="6"><path d="M0.5 0.5l4 4 4-4" fill="none" stroke="#c8c8c8"/></svg>
<div class="a" style="left:1121px;top:177px;width:245px;height:1px;background:#404040"></div>
<div class="a" style="left:1121px;top:178px;width:229px;height:525px;background:#4b4b4b"></div>
<div class="a" style="left:1350px;top:178px;width:14px;height:525px;background:#4a4a4a"></div>
<div class="a" style="left:1121px;top:179px;width:229px;height:31px;background:#535353"></div>
<div class="a" style="left:1152px;top:179px;width:198px;height:31px;background:#6a6a6a"></div>
<div class="a" style="left:1121px;top:211px;width:229px;height:31px;background:#535353"></div>
<div class="a" style="left:1121px;top:243px;width:229px;height:32px;background:#535353"></div>
<div class="a" style="left:1151px;top:179px;width:1px;height:96px;background:#454545"></div>
<svg class="a" style="left:1130px;top:189px" width="14" height="10"><path d="M0.5 5C2.5 1.5 4.5 0.5 7 0.5S11.5 1.5 13.5 5C11.5 8.5 9.5 9.5 7 9.5S2.5 8.5 0.5 5z" fill="#d8d8d8"/><circle cx="7" cy="5" r="2.6" fill="#3c3c3c"/><circle cx="6.2" cy="4.2" r="0.8" fill="#d8d8d8"/></svg>
<svg class="a" style="left:1130px;top:221px" width="14" height="10"><path d="M0.5 5C2.5 1.5 4.5 0.5 7 0.5S11.5 1.5 13.5 5C11.5 8.5 9.5 9.5 7 9.5S2.5 8.5 0.5 5z" fill="#d8d8d8"/><circle cx="7" cy="5" r="2.6" fill="#3c3c3c"/><circle cx="6.2" cy="4.2" r="0.8" fill="#d8d8d8"/></svg>
<svg class="a" style="left:1130px;top:253px" width="14" height="10"><path d="M0.5 5C2.5 1.5 4.5 0.5 7 0.5S11.5 1.5 13.5 5C11.5 8.5 9.5 9.5 7 9.5S2.5 8.5 0.5 5z" fill="#d8d8d8"/><circle cx="7" cy="5" r="2.6" fill="#3c3c3c"/><circle cx="6.2" cy="4.2" r="0.8" fill="#d8d8d8"/></svg>
<svg class="a" style="left:1148px;top:176px" width="48" height="36">
<defs><pattern id="ck" x="8" y="7" width="8" height="8" patternUnits="userSpaceOnUse"><rect width="8" height="8" fill="#fff"/><rect width="4" height="4" fill="#cfcfcf"/><rect x="4" y="4" width="4" height="4" fill="#cfcfcf"/></pattern></defs>
<path d="M8 7h30v11H25.5v13H8z" fill="url(#ck)"/>
<clipPath id="tc"><path d="M8 7h30v11H25.5v13H8z"/></clipPath>
<circle cx="22" cy="19" r="5.2" fill="#ffd800" stroke="#111" stroke-width="0.9" stroke-dasharray="1 2" clip-path="url(#tc)"/>
<path d="M8 7h30v11H25.5v13H8z" fill="none" stroke="#333" stroke-width="1.8"/>
<rect x="28" y="20" width="10" height="10" fill="#6a6a6a"/>
<g fill="none" stroke="#e8e8e8" stroke-width="1"><path d="M29 20.5h8M29 29.5h8M28.5 21v8M37.5 21v8"/><circle cx="28.5" cy="20.5" r="1.3" fill="#6a6a6a"/><circle cx="37.5" cy="20.5" r="1.3" fill="#6a6a6a"/><circle cx="28.5" cy="29.5" r="1.3" fill="#6a6a6a"/><circle cx="37.5" cy="29.5" r="1.3" fill="#6a6a6a"/></g>
<path d="M5.8 13V4.8H17M29 4.8h11.6V13M5.8 24v8.4H17M29 32.4h11.6V24" fill="none" stroke="#fff" stroke-width="1.5"/>
</svg>
<div class="a" style="left:1155px;top:214px;width:32px;height:25px;background:#fff;border:2px solid #2a2a2a"></div>
<div class="a" style="left:1155px;top:246px;width:32px;height:25px;background:#fff;border:2px solid #2a2a2a"></div>
<div class="a" style="left:1197px;top:179px;line-height:31px;font-size:12px;color:#f4f4f4">椭圆 <span style="color:#dde">1</span></div>
<div class="a" style="left:1197px;top:211px;line-height:31px;font-size:12px;color:#f4f4f4">背景 拷贝</div>
<div class="a" style="left:1199px;top:243px;line-height:31px;font-size:12px;color:#f4f4f4;font-style:italic">背景</div>
<svg class="a" style="left:1322px;top:253px" width="12" height="13"><path d="M3 6V4a3 3 0 0 1 6 0v2" fill="none" stroke="#d8d8d8" stroke-width="1.3"/><rect x="1" y="6" width="10" height="6.5" fill="none" stroke="#d8d8d8" stroke-width="1.3"/><circle cx="6" cy="9.3" r="1" fill="#d8d8d8"/></svg>
<div class="a" style="left:1121px;top:703px;width:245px;height:25px;background:#535353"></div>
<svg class="a" style="left:1161px;top:711px" width="16" height="9" fill="none" stroke="#8a8a8a" stroke-width="1.3"><path d="M6 1H3.5a3.5 3.5 0 0 0 0 7H6M10 1h2.5a3.5 3.5 0 0 1 0 7H10M5 4.5h6"/></svg>
<div class="a" style="left:1190px;top:706px;line-height:18px;font-size:14px;color:#a8a8a8;font-style:italic">fx</div>
<div class="a" style="left:1213px;top:708px;width:12px;height:12px;background:#a8a8a8;border-radius:1px"></div>
<div class="a" style="left:1238px;top:709px;width:12px;height:11px;border:1.3px solid #8a8a8a;border-radius:50% 50% 0 0"></div>
<div class="a" style="left:1272px;top:710px;width:14px;height:10px;background:#a8a8a8"></div>
<div class="a" style="left:1300px;top:709px;width:12px;height:11px;border:1.3px solid #8a8a8a"></div>
<svg class="a" style="left:1326px;top:708px" width="11" height="13" fill="none" stroke="#8a8a8a" stroke-width="1.2"><path d="M0 2.5h11M4 2.5V1h3v1.5M1.5 3v9.5h8V3M4 5v6M7 5v6"/></svg>
<!-- properties panel -->
<div class="a" style="left:790px;top:141px;width:4px;height:367px;background:linear-gradient(90deg,rgba(0,0,0,0),rgba(0,0,0,0.12))"></div>
<div class="a" style="left:794px;top:141px;width:287px;height:367px;background:#383838"></div>
<div class="a" style="left:795px;top:145px;width:284px;height:17px;background:#424242"></div>
<div class="a" style="left:795px;top:145px;width:39px;height:17px;background:#535353"></div>
<div class="a" style="left:873px;top:145px;width:1px;height:17px;background:#3a3a3a"></div>
<div class="a" style="left:802px;top:145px;line-height:18px;font-size:12px;color:#f0f0f0">属性</div>
<div class="a" style="left:841px;top:145px;line-height:18px;font-size:12px;color:#b4b4b4">信息</div>
<svg class="a" style="left:1038px;top:150px" width="10" height="8" fill="none" stroke="#dedede" stroke-width="1.4"><path d="M0.5 0.5l3.5 3.5-3.5 3.5M5.5 0.5L9 4 5.5 7.5"/></svg>
<div class="a" style="left:1055px;top:148px;width:1px;height:11px;background:#c8c8c8"></div>
<svg class="a" style="left:1063px;top:150px" width="11" height="8" fill="#d8d8d8"><rect y="0" width="10" height="1.2"/><rect y="2.1" width="10" height="1.2"/><rect y="4.2" width="10" height="1.2"/><rect y="6.3" width="10" height="1.2"/></svg>
<div class="a" style="left:795px;top:162px;width:284px;height:343px;background:#535353"></div>
<div class="a" style="left:794px;top:195px;width:285px;height:1px;background:#4a4a4a"></div>
<div class="a" style="left:1064px;top:196px;width:15px;height:278px;background:#4c4c4c"></div>
<div class="a" style="left:805px;top:167px;width:24px;height:24px;background:#393939;border:1px solid #5e5e5e;border-radius:3px"></div>
<svg class="a" style="left:809px;top:172px" width="15" height="15" fill="none" stroke="#d8d8d8" stroke-width="1.1"><rect x="2.5" y="2.5" width="10" height="10"/><g fill="#393939"><rect x="0.5" y="0.5" width="3.5" height="3.5"/><rect x="11" y="0.5" width="3.5" height="3.5"/><rect x="0.5" y="11" width="3.5" height="3.5"/><rect x="11" y="11" width="3.5" height="3.5"/></g></svg>
<svg class="a" style="left:832px;top:173px" width="17" height="12"><rect width="17" height="12" fill="#d4d4d4"/><circle cx="8.5" cy="6" r="3.8" fill="#4a4a4a"/></svg>
<div class="a" style="left:858px;top:171px;line-height:19px;font-size:12px;color:#c8c8c8">实时形状属性</div>
<svg class="a" style="left:801px;top:206px" width="10" height="6"><path d="M0.5 0.5l4.5 4.5 4.5-4.5" fill="none" stroke="#aaa"/></svg>
<div class="a" style="left:817px;top:199px;line-height:20px;font-size:12px;color:#e4e4e4">边框</div>
<div class="a" style="left:852px;top:208px;width:205px;height:1px;background:#474747"></div>
<div class="a" style="left:802px;top:226px;line-height:19px;font-size:12px;color:#a8a8a8">W:</div>
<div class="a" style="left:825px;top:226px;line-height:19px;font-size:12px;color:#f0f0f0">300 像素</div>
<div class="a" style="left:824px;top:242px;width:72px;height:1px;background:#6e6e6e"></div>
<svg class="a" style="left:905px;top:229px" width="15" height="9" fill="none" stroke="#c8c8c8" stroke-width="1.4"><path d="M6 1.5H3.5a3 3 0 0 0 0 6H6M9 1.5h2.5a3 3 0 0 1 0 6H9M4.5 4.5h6"/></svg>
<div class="a" style="left:931px;top:226px;line-height:19px;font-size:12px;color:#a8a8a8">H:</div>
<div class="a" style="left:952px;top:226px;line-height:19px;font-size:12px;color:#f0f0f0">300 像素</div>
<div class="a" style="left:951px;top:242px;width:72px;height:1px;background:#6e6e6e"></div>
<div class="a" style="left:804px;top:256px;line-height:19px;font-size:12px;color:#a8a8a8">X:</div>
<div class="a" style="left:825px;top:256px;line-height:19px;font-size:12px;color:#f0f0f0">250 像素</div>
<div class="a" style="left:824px;top:272px;width:72px;height:1px;background:#6e6e6e"></div>
<div class="a" style="left:932px;top:256px;line-height:19px;font-size:12px;color:#a8a8a8">Y:</div>
<div class="a" style="left:952px;top:256px;line-height:19px;font-size:12px;color:#f0f0f0">150 像素</div>
<div class="a" style="left:951px;top:272px;width:72px;height:1px;background:#6e6e6e"></div>
<svg class="a" style="left:801px;top:281px" width="10" height="6"><path d="M0.5 0.5l4.5 4.5 4.5-4.5" fill="none" stroke="#aaa"/></svg>
<div class="a" style="left:816px;top:274px;line-height:20px;font-size:12px;color:#e4e4e4">形状细节</div>
<div class="a" style="left:877px;top:283px;width:180px;height:1px;background:#474747"></div>
<div class="a" style="left:801px;top:296px;width:30px;height:21px;border:1px solid #6a6a6a;background:#4a4a4a"></div>
<div class="a" style="left:804px;top:299px;width:24px;height:15px;background:#ffd800"></div>
<div class="a" style="left:835px;top:296px;width:30px;height:21px;border:1px solid #6a6a6a;background:#4a4a4a"></div>
<div class="a" style="left:838px;top:299px;width:24px;height:15px;background:#000"></div>
<div class="a" style="left:843px;top:303px;width:14px;height:6px;border:1.5px solid #f0f0f0"></div>
<div class="a" style="left:872px;top:298px;line-height:19px;font-size:12px;color:#f0f0f0">12 像素</div>
<div class="a" style="left:869px;top:315px;width:82px;height:1px;background:#6e6e6e"></div>
<svg class="a" style="left:940px;top:304px" width="9" height="6"><path d="M0.5 0.5l4 4 4-4" fill="none" stroke="#c8c8c8"/></svg>
<div class="a" style="left:956px;top:296px;width:66px;height:20px;background:#4a4a4a;border:1px solid #5c5c5c;border-radius:2px"></div>
<div class="a" style="left:960px;top:305px;width:47px;height:2px;background:#f0f0f0"></div>
<svg class="a" style="left:1010px;top:304px" width="9" height="6"><path d="M0.5 0.5l4 4 4-4" fill="none" stroke="#c8c8c8"/></svg>
<div class="a" style="left:801px;top:325px;width:63px;height:20px;background:#4a4a4a;border:1px solid #5c5c5c;border-radius:2px"></div>
<div class="a" style="left:869px;top:325px;width:65px;height:20px;background:#4a4a4a;border:1px solid #5c5c5c;border-radius:2px"></div>
<div class="a" style="left:939px;top:325px;width:83px;height:20px;background:#4a4a4a;border:1px solid #5c5c5c;border-radius:2px"></div>
<svg class="a" style="left:809px;top:329px" width="15" height="14"><rect width="15" height="14" fill="#e6e6e6"/><rect x="3" y="3" width="9" height="8" fill="none" stroke="#111" stroke-width="1"/><rect x="5" y="5" width="5" height="4" fill="#9a9a9a"/><g fill="#e6e6e6" stroke="#111" stroke-width="0.9"><circle cx="3" cy="3" r="1.4"/><circle cx="12" cy="3" r="1.4"/><circle cx="3" cy="11" r="1.4"/><circle cx="12" cy="11" r="1.4"/></g></svg>
<svg class="a" style="left:852px;top:333px" width="9" height="6"><path d="M0.5 0.5l4 4 4-4" fill="none" stroke="#c8c8c8"/></svg>
<svg class="a" style="left:878px;top:331px" width="14" height="11"><path d="M5.5 0.5H13v10H5.5a5 5 0 0 1 0-10z" fill="#dcdcdc"/><rect x="5" y="4" width="2.8" height="2.8" fill="#111"/><path d="M7 5.4h6" stroke="#111" stroke-width="1"/></svg>
<svg class="a" style="left:923px;top:333px" width="9" height="6"><path d="M0.5 0.5l4 4 4-4" fill="none" stroke="#c8c8c8"/></svg>
<svg class="a" style="left:948px;top:329px" width="14" height="13"><path d="M1 12.5V6a5.5 5.5 0 0 1 5.5-5.5H13v5H9v3h3v4H6v-6z" fill="#dcdcdc"/><rect x="5.3" y="4.8" width="2.6" height="2.6" fill="#111"/><path d="M7 6.1h6M6.6 6v6.5" stroke="#111" stroke-width="1"/></svg>
<svg class="a" style="left:1010px;top:333px" width="9" height="6"><path d="M0.5 0.5l4 4 4-4" fill="none" stroke="#c8c8c8"/></svg>
<svg class="a" style="left:801px;top:354px" width="10" height="6"><path d="M0.5 0.5l4.5 4.5 4.5-4.5" fill="none" stroke="#aaa"/></svg>
<div class="a" style="left:816px;top:347px;line-height:20px;font-size:12px;color:#e4e4e4">路径操作</div>
<div class="a" style="left:877px;top:356px;width:181px;height:1px;background:#474747"></div>
<div class="a" style="left:845px;top:369px;width:133px;height:25px;background:#5a5a5a"></div>
<div class="a" style="left:846px;top:370px;width:32px;height:23px;background:#3c3c3c"></div>
<div class="a" style="left:879px;top:370px;width:32px;height:23px;background:#535353"></div>
<div class="a" style="left:912px;top:370px;width:32px;height:23px;background:#535353"></div>
<div class="a" style="left:945px;top:370px;width:32px;height:23px;background:#535353"></div>
<svg class="a" style="left:846px;top:370px" width="132" height="23">
<path d="M9.5 4h9.5v4h4v10h-9.5v-4h-4z" fill="#dcdcdc"/>
<rect x="43" y="5" width="8" height="9" fill="#dcdcdc"/><rect x="46.5" y="8.5" width="8.5" height="9" fill="#535353" stroke="#dcdcdc" stroke-width="1.1"/>
<rect x="75.5" y="4.5" width="8.5" height="9" fill="none" stroke="#dcdcdc" stroke-width="1.1"/><rect x="79" y="8" width="8.5" height="9" fill="none" stroke="#dcdcdc" stroke-width="1.1"/><rect x="79" y="8" width="5" height="5.5" fill="#dcdcdc"/>
<path d="M108.5 5h9v4h4v9h-9v-4h-4z" fill="#dcdcdc"/><rect x="112.5" y="9" width="5" height="5" fill="#535353"/>
</svg>



<div class="a" style="left:794px;top:499px;width:285px;height:1px;background:#3a3a3a"></div>
<div class="a" style="left:794px;top:500px;width:285px;height:6px;background:#535353"></div>
<div class="a" style="left:927px;top:501px;width:19px;height:4px;background:repeating-linear-gradient(90deg,#404040 0 1px,transparent 1px 2px)"></div>

<!-- ime -->
<div class="a" style="left:825px;top:704px;width:163px;height:24px;background:#f8fbfe;border:1px solid #a9c4e2;border-right-color:#c8d8ea"></div>
<svg class="a" style="left:802px;top:700px" width="31" height="29"><path d="M6 3.5l21-2.5a3 3 0 0 1 3.2 2.6l-1 20a3 3 0 0 1-2.5 2.8L6 28a3 3 0 0 1-3.4-2.7L1.2 7a3 3 0 0 1 2.6-3.3z" fill="#f05a24"/><path d="M22 8.5c-4-2-12-2-13 2s11 3 10 7-9 4-12 2" fill="none" stroke="#fff" stroke-width="3.4" stroke-linecap="round"/></svg>
<svg class="a" style="left:836px;top:707px" width="150" height="18">
<g fill="none" stroke="#2b7bd3" stroke-width="2.2"><rect x="2" y="5" width="12" height="7.5"/><path d="M8 1v17"/></g>
<path d="M33 3a7 7 0 1 1-9.5 9.5A7.5 7.5 0 0 0 33 3z" fill="#2b7bd3"/>
<circle cx="49" cy="6" r="1.7" fill="none" stroke="#2b7bd3" stroke-width="1.2"/><path d="M55 8.5a1.6 1.6 0 1 1 .5 2c0 2-1 3-2 4" fill="#2b7bd3" stroke="#2b7bd3" stroke-width="1.3"/>
<rect x="67" y="4" width="15" height="11" rx="1.5" fill="none" stroke="#2b7bd3" stroke-width="2"/><g fill="#2b7bd3"><rect x="70" y="7" width="2" height="1.5"/><rect x="73" y="7" width="2" height="1.5"/><rect x="76" y="7" width="2" height="1.5"/><rect x="79" y="7" width="1.5" height="1.5"/><rect x="70" y="10" width="10.5" height="1.5"/></g>
<circle cx="96" cy="5" r="3.5" fill="#2b7bd3"/><path d="M90 16c0-5 3-7 6-7s5 1 6 3v4z" fill="#2b7bd3"/><rect x="97" y="11" width="10" height="7" fill="#2b7bd3"/><text x="97.5" y="17" font-size="7" font-weight="bold" fill="#fff" font-family="Liberation Sans">24</text>
<path d="M115 4l4-2c1 1.5 4 1.5 5 0l4 2 2.5 4-3 1.5V17h-12V9.5l-3-1.5z" fill="#2b7bd3"/>
<path d="M134 15l7-7a4 4 0 0 1 5-5l-2.5 2.5 1 2 2 1 2.5-2.5a4 4 0 0 1-5 5l-7 7a1.5 1.5 0 0 1-3-3z" fill="#2b7bd3"/>
</svg>
<!-- taskbar -->
<div class="a" style="left:0;top:728px;width:1366px;height:40px;background:#000"></div>
<div class="a" style="left:380px;top:728px;width:700px;height:40px;background:linear-gradient(90deg,#000 0,#15120f 8%,#1b1815 40%,#110e0c 75%,#000 100%);clip-path:polygon(0 0,100% 0,100% 100%,40px 100%)"></div>
<svg class="a" style="left:15px;top:739px" width="18" height="18"><path d="M1 2.8l6.5-.9v6.6H1zM8.5 1.8L17 0.5v8H8.5zM1 9.5h6.5v6.6L1 15.2zM8.5 9.5H17v8l-8.5-1.3z" fill="#fff"/></svg>
<svg class="a" style="left:63px;top:739px" width="18" height="18" fill="none" stroke="#fff" stroke-width="1.3"><circle cx="11.3" cy="6.5" r="5.2"/><path d="M7.5 10.3L1.3 16.5"/></svg>
<svg class="a" style="left:106px;top:732px" width="32" height="32"><g transform="translate(16 15.4)"><path d="M0 0H11.5A5.75 8.5 0 0 0 0 0z" fill="#34d07a" transform="rotate(198)"/><path d="M0 0H11.5A5.75 8.5 0 0 0 0 0z" fill="#f5dc00" transform="rotate(126)"/><path d="M0 0H11.5A5.75 8.5 0 0 0 0 0z" fill="#f0401e" transform="rotate(54)"/><path d="M0 0H11.5A5.75 8.5 0 0 0 0 0z" fill="#c544f0" transform="rotate(-18)"/><path d="M0 0H11.5A5.75 8.5 0 0 0 0 0z" fill="#3d8ef0" transform="rotate(-90)"/><circle r="1.9" fill="#fff"/></g></svg>
<div class="a" style="left:102px;top:766px;width:40px;height:2px;background:#f4a8b4"></div>
<div class="a" style="left:147px;top:728px;width:48px;height:40px;background:#3a3a3a"></div>
<div class="a" style="left:147px;top:766px;width:48px;height:2px;background:#f4a8b4"></div>
<div class="a" style="left:160px;top:737px;width:21px;height:20px;border:2px solid #2fc4f2;background:#061e26;color:#2fc4f2;font-size:12px;line-height:16px;text-align:center">Ps</div>
<div class="a" style="left:209px;top:737px;width:21px;height:20px;border:2px solid #ff7f00;background:#261000;color:#ff7f00;font-size:12px;line-height:16px;text-align:center">Ai</div>
<div class="a" style="left:258px;top:737px;width:21px;height:20px;border:2px solid #d18cff;background:#1a0830;color:#d18cff;font-size:12px;line-height:16px;text-align:center">Ae</div>
<svg class="a" style="left:300px;top:732px" width="36" height="32"><ellipse cx="12" cy="17" rx="6.5" ry="4" fill="#888" stroke="#a33" stroke-width="0.6"/><ellipse cx="15.5" cy="10.5" rx="8" ry="5.8" fill="#f2f2f8" stroke="#e02020" stroke-width="1.2" transform="rotate(-12 15.5 10.5)"/><path d="M11 9l9 10M14 7l5 12" stroke="#666" stroke-width="1.4"/><ellipse cx="19.5" cy="23" rx="2.3" ry="4" fill="none" stroke="#2a9de0" stroke-width="1.8" transform="rotate(-15 19.5 23)"/><ellipse cx="24.5" cy="19" rx="2.3" ry="4" fill="none" stroke="#2a9de0" stroke-width="1.8" transform="rotate(-50 24.5 19)"/></svg>
<svg class="a" style="left:660px;top:741px" width="46" height="20"><path d="M9 0.5l8 4.5v9.5l-8 4.5-8-4.5V5z" fill="#4d4d4d"/><text x="3.2" y="14" font-size="10" font-weight="bold" fill="#111" font-family="Liberation Sans">UI</text><text x="20" y="13" font-size="11" fill="#4d4d4d" font-family="Liberation Sans">·cn</text></svg>
<svg class="a" style="left:1114px;top:743px" width="13" height="9"><path d="M0.5 8l6-6.5 6 6.5" fill="none" stroke="#fff" stroke-width="1.3"/></svg>
<svg class="a" style="left:1135px;top:741px" width="19" height="13" fill="none" stroke="#fff" stroke-width="1"><path d="M1.8 0v3M4 0v3M2.9 6.5v6"/><path d="M0.5 3h4.8v2a2.4 2.4 0 0 1-4.8 0z"/><rect x="5.5" y="3.5" width="11" height="6"/><path d="M16.5 5.3h1.3v2.4h-1.3"/><rect x="7" y="5" width="8" height="3" fill="#fff" stroke="none"/></svg>
<svg class="a" style="left:1163px;top:742px" width="13" height="13" fill="none" stroke="#fff" stroke-width="1.1"><path d="M1 12a11 11 0 0 1 11-11M3.5 12A8.5 8.5 0 0 1 12 3.5M6 12a6 6 0 0 1 6-6"/><rect x="8.5" y="8.5" width="4" height="4" fill="#fff" stroke="none"/></svg>
<svg class="a" style="left:1183px;top:741px" width="18" height="15" fill="none" stroke="#fff" stroke-width="1"><path d="M1 5h3l4-4v13l-4-4H1z"/><path d="M10.5 5a3.5 3.5 0 0 1 0 5M13 3a6.5 6.5 0 0 1 0 9" stroke="#ddd"/><path d="M15.5 1a10 10 0 0 1 0 13" stroke="#888"/></svg>
<svg class="a" style="left:1208px;top:739px" width="18" height="18" fill="none" stroke="#fff" stroke-width="1"><path d="M7 12.5H0.5V0.5h15v8"/><path d="M3 3.5h10M3 6h10M3 8.5h5"/><circle cx="12" cy="12.5" r="3.6" fill="#000"/><path d="M10 12.5h4"/></svg>
<div class="a" style="left:1294px;top:749px;line-height:12px;font-size:12.5px;letter-spacing:0.6px;color:#fff">2016/3/11</div>
<div class="a" style="left:1361px;top:728px;width:1px;height:40px;background:#444"></div>
<svg class="a" style="left:1190px;top:698px" width="176" height="64" font-family="Liberation Sans" font-weight="bold">
<g stroke="#fff" stroke-width="5" stroke-linejoin="round" fill="#fff">
<text x="13" y="29" font-size="28" letter-spacing="-0.6">fevte.com</text>
<text x="44" y="53" font-size="23.5" letter-spacing="-0.3">飞特教程网</text>
</g>
<g stroke="#0b0b3c" stroke-width="1" fill="#0b0b3c">
<text x="13" y="29" font-size="28" letter-spacing="-0.6">fe<tspan fill="#ff7a00" stroke="#ff7a00">v</tspan>te.com</text>
<text x="44" y="53" font-size="23.5" letter-spacing="-0.3" stroke-width="1">飞特教程网</text>
</g>
</svg>
</body></html>
